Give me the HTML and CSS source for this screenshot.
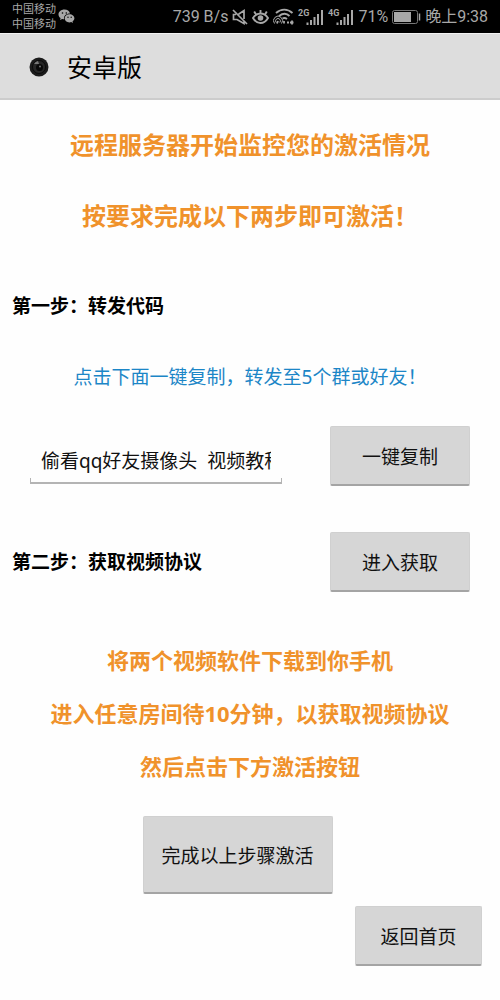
FILE: index.html
```html
<!DOCTYPE html>
<html lang="zh-CN">
<head>
    <meta charset="UTF-8">
    <meta name="viewport" content="width=device-width, initial-scale=1.0">
    <title>安卓版</title>
    <link rel="stylesheet" href="styles.css">
</head>
<body>

    <div class="status-bar">
        <div class="carriers">
            <span>中国移动</span>
            <span>中国移动</span>
        </div>
        <svg class="wechat" width="17" height="15" viewBox="0 0 17 15">
            <path fill="#a8a8a8" d="M6.500 0.500C3 0.500 0.500 2.700 0.500 5.400c0 1.500.8 2.800 2.100 3.700L2 11l2.200-1.100c.6.2 1.200.3 1.800.3C5.600 6.800 8 4.500 12 4.500 11.500 2.100 9.300.5 6.500.5z"/>
            <path fill="#a8a8a8" d="M11.500 5.200c-2.800 0-4.900 1.800-4.900 4.100s2.100 4.100 4.900 4.100c.6 0 1.100-.1 1.700-.3l1.800 1-.5-1.600c1.100-.8 1.900-1.900 1.900-3.200 0-2.300-2.200-4.100-4.900-4.100z"/>
            <g fill="#000">
                <circle cx="4.500" cy="4" r=".8"/><circle cx="8.300" cy="4" r=".8"/>
                <circle cx="10" cy="8.200" r=".7"/><circle cx="13.200" cy="8.200" r=".7"/>
            </g>
        </svg>

        <div class="status-right">
            <span class="speed">739 B/s</span>
            <svg width="16" height="18" viewBox="0 0 16 18" fill="none" stroke="#a8a8a8" stroke-width="1.700">
                <path d="M1 2l14 14M6.500 6.200L12 2.500v8.500M4 6.500H1.500v5H5l7 4v-2"/>
            </svg>
            <svg width="17" height="16" viewBox="0 0 17 16" fill="none" stroke="#a8a8a8" stroke-width="1.900">
                <path d="M1 9c2-3 4.500-4.500 7.500-4.500S14 6 16 9c-2 3.500-4.500 5-7.500 5S3 12.500 1 9zM8.500 4.500V1M4 5.500L2.200 2.500M13 5.500l1.800-3"/>
                <circle cx="8.500" cy="9" r="2.800" fill="#a8a8a8" stroke="none"/>
            </svg>
            <svg width="21" height="17" viewBox="0 0 21 17" fill="none" stroke="#a8a8a8" stroke-width="1.900">
                <path d="M3 5c5-4.500 11.500-4.500 16.500 0M6 8c4-3 7.500-3 10.500 0M9.500 10.500c1.500-.8 3-.6 4.500.5"/>
                <path stroke-width="1" d="M1.500 15.500a4.500 4.500 0 1 1 7 0M3.200 14.500a2.400 2.400 0 1 1 3.600 0"/>
                <path stroke-width="1.800" d="M4 15.500l1-2.500M11 13v2.500M14 14.500h2M19 12.500v4M17 14.500h3.500"/>
            </svg>
            <svg class="signal" width="26" height="18" viewBox="0 0 26 18">
                <text x="0" y="8">2G</text>
                <path d="M9.500 14.500V17M13 12v5M16.500 9v8M20 6v11M24 2v15"/>
            </svg>
            <svg class="signal" width="26" height="18" viewBox="0 0 26 18">
                <text x="0" y="8">4G</text>
                <path d="M9.500 14.500V17M13 12v5M16.500 9v8M20 6v11M24 2v15"/>
            </svg>
            <span class="percent">71%</span>
            <svg class="battery" width="29" height="14" viewBox="0 0 29 14">
                <rect x=".5" y=".5" width="25" height="13" rx="2" fill="none" stroke="#777"/>
                <rect x="2" y="2" width="17" height="10" fill="#a8a8a8"/>
                <path d="M27.500 3.500v7" stroke="#a8a8a8" stroke-width="1.500"/>
            </svg>
            <span>晚上9:38</span>
        </div>
    </div>

    <header>
        <svg width="20" height="20" viewBox="0 0 20 20">
            <circle cx="10" cy="10" r="9.500" fill="#1b1b1b"/>
            <circle cx="10" cy="10" r="6.500" fill="#262626" stroke="#0a0a0a"/>
            <circle cx="10.500" cy="10.500" r="3.500" fill="#080808"/>
            <path d="M5 7a7 7 0 0 1 4-3l1 3z" fill="#777"/>
            <circle cx="11" cy="9.500" r="1" fill="#777"/>
        </svg>
        <h1>安卓版</h1>
    </header>

    <main>
        <div class="notice">
            <p>远程服务器开始监控您的激活情况</p>
            <p>按要求完成以下两步即可激活！</p>
        </div>

        <h2>第一步：转发代码</h2>
        <p class="hint">点击下面一键复制，转发至5个群或好友！</p>

        <div class="row">
            <div class="field">
                <input type="text" id="shareCode" aria-label="转发代码" value="偷看qq好友摄像头  视频教程">
            </div>
            <button type="button">一键复制</button>
        </div>

        <div class="row step-two">
            <h2>第二步：获取视频协议</h2>
            <button type="button">进入获取</button>
        </div>

        <div class="guide">
            <p>将两个视频软件下载到你手机</p>
            <p>进入任意房间待10分钟，以获取视频协议</p>
            <p>然后点击下方激活按钮</p>
        </div>

        <button type="button" class="activate">完成以上步骤激活</button>
        <button type="button" class="home">返回首页</button>
    </main>

</body>
</html>
```
FILE: styles.css
```css
* { box-sizing: border-box; }

body {
    margin: 0;
    background-color: #fefefe;
    color: #000;
    font-family: "Noto Sans", "Noto Sans CJK SC", sans-serif;
}

h1, h2, p { margin: 0; }

svg { flex: none; }

/* status bar */
.status-bar {
    display: flex;
    align-items: center;
    height: 33px;
    padding: 0 12px;
    background-color: #000;
    color: #a8a8a8;
    font-family: Roboto, "Noto Sans CJK SC", sans-serif;
    white-space: nowrap;
}

.carriers {
    display: flex;
    flex-direction: column;
    font-size: 11px;
    line-height: 15px;
}

.wechat { margin-left: 2px; }

.status-right {
    display: flex;
    align-items: center;
    gap: 4px;
    margin-left: auto;
    font-size: 16px;
    line-height: 24px;
}

.signal text {
    fill: #a8a8a8;
    font-family: "Liberation Sans Narrow", Roboto, sans-serif;
    font-size: 9px;
    font-weight: bold;
}

.signal path {
    stroke: #a8a8a8;
    stroke-width: 2;
}

/* title bar */
header {
    display: flex;
    align-items: center;
    gap: 18px;
    height: 67px;
    padding: 2px 29px 0;
    background-color: #ddd;
    border-top: 1px solid #f2f2f2;
    border-bottom: 2px solid #ccc;
}

h1 {
    font-size: 25px;
    font-weight: normal;
    line-height: 36px;
}

main {
    display: flex;
    flex-direction: column;
    padding: 9px 12px 34px;
}

.notice, .guide {
    color: #f0922b;
    font-weight: bold;
    text-align: center;
}

.notice {
    font-size: 24px;
    line-height: 71px;
}

h2 {
    font-size: 19px;
    line-height: 30px;
}

.notice + h2 { margin-top: 40px; }

.hint {
    margin-top: 41px;
    color: #1c86c7;
    font-size: 19px;
    line-height: 30px;
    text-align: center;
}

.row {
    display: flex;
    align-items: center;
    justify-content: space-between;
    margin-top: 34px;
    padding-right: 18px;
}

.step-two { margin-top: 46px; }

/* underline with two short end ticks */
.field {
    width: 252px;
    margin-left: 18px;
    padding: 8px 11px 0;
    background:
        linear-gradient(#b4b4b4, #b4b4b4) left bottom / 1px 6px no-repeat,
        linear-gradient(#b4b4b4, #b4b4b4) right bottom / 1px 6px no-repeat,
        linear-gradient(#b4b4b4, #b4b4b4) left bottom / 100% 2px no-repeat;
}

input {
    display: block;
    width: 100%;
    height: 48px;
    padding: 0;
    border: none;
    outline: none;
    background: none;
    color: #111;
    font: inherit;
    font-size: 19px;
}

button {
    width: 140px;
    height: 60px;
    padding: 0;
    border: 1px solid #d0d0d0;
    border-bottom: 2px solid #a4a4a4;
    border-radius: 2px;
    background-color: #d6d6d6;
    color: #111;
    font: inherit;
    font-size: 19px;
    cursor: pointer;
}

.guide {
    margin-top: 42px;
    font-size: 22px;
    line-height: 53px;
}

.activate {
    align-self: center;
    width: 190px;
    height: 78px;
    margin: 23px 25px 0 0;
}

.home {
    align-self: flex-end;
    width: 127px;
    margin: 12px 6px 0 0;
}
```
